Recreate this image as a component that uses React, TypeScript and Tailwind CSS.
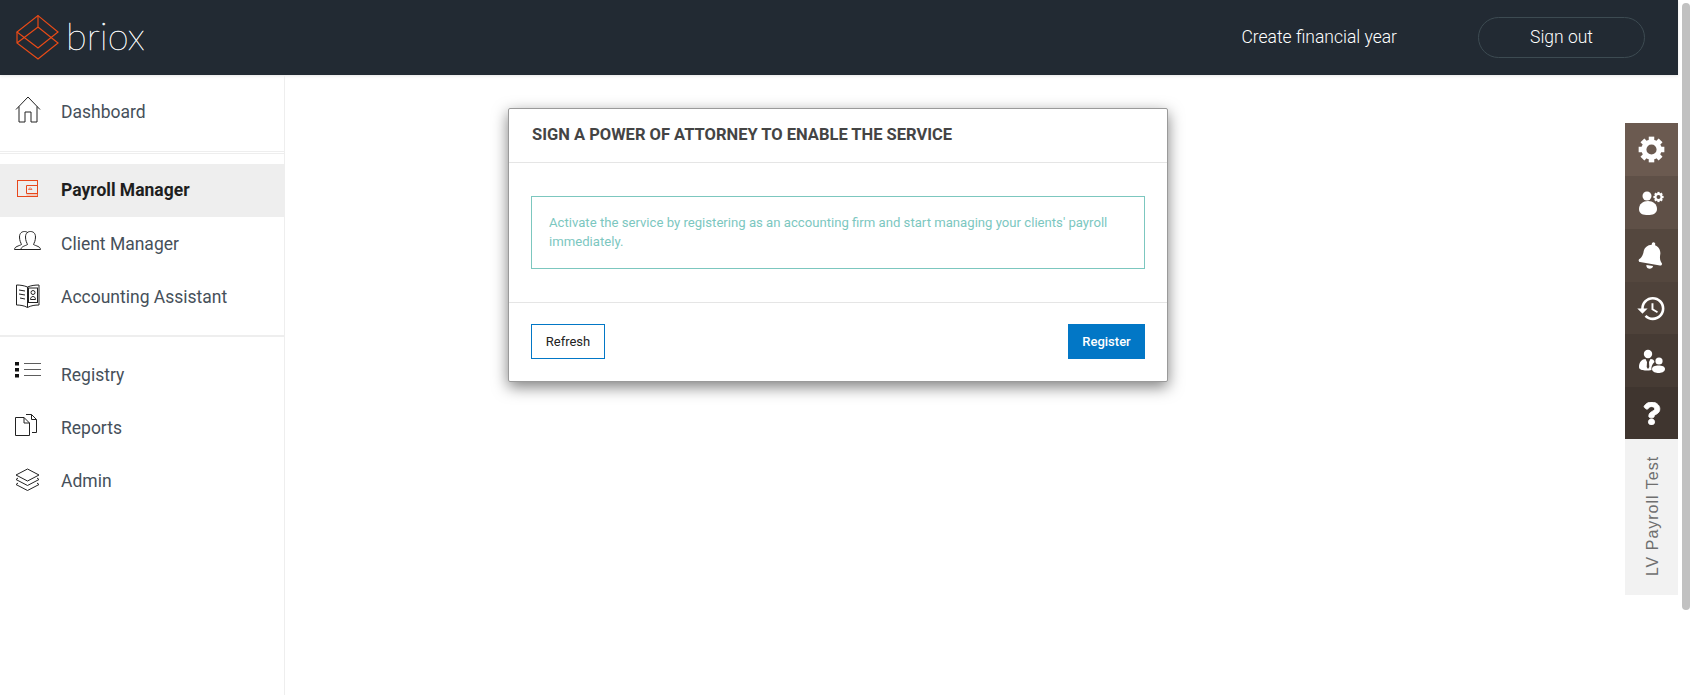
import { FaBell, FaQuestion } from "react-icons/fa"
import { MdHistory } from "react-icons/md"

const font = { fontFamily: "Roboto, sans-serif" }

function Logo() {
  return (
    <svg width="43" height="45" viewBox="0 0 43 45" fill="none" stroke="#ea4a16" strokeWidth="1.2" className="shrink-0">
      <path d="M22 0.6 L42 17 L22 33 L1 17 Z" />
      <path d="M22 0.6 V12 M1 17 V28 L22 44 L42 28 L22 12 L1 28" />
    </svg>
  )
}

function HomeIcon() {
  return (
    <svg width="26" height="27" viewBox="0 0 26 27" fill="none" stroke="#222" strokeWidth="1">
      <path d="M1 13.5 L13 1 L25 13.5" />
      <path d="M4 10.5 V26 H10 V16 H16 V26 H22 V10.5" />
    </svg>
  )
}

function PayrollIcon() {
  return (
    <svg width="21" height="17" viewBox="0 0 21 17" fill="none" stroke="#e8471b" strokeWidth="1">
      <rect x="0.5" y="0.5" width="20" height="16" />
      <path d="M9.5 5.5 H20.5 V13.5 H9.5 Z" />
      <path d="M11.5 9.5 C12 7.5 14.5 7.5 15 9.5 Z" strokeWidth="0.7" />
      <path d="M9.5 15 H20.5" stroke="#f5a58a" />
    </svg>
  )
}

function ClientIcon() {
  return (
    <svg width="27" height="19" viewBox="0 0 27 19" fill="none" stroke="#222" strokeWidth="1">
      <path d="M7 18.5 C7 15.5 11 15 13.5 13.5 C13 12 11.5 10 11.5 6 C11.5 2 14 0.5 16.5 0.5 C19 0.5 21.5 2 21.5 6 C21.5 10 20 12 19.5 13.5 C22 15 26.5 15.5 26.5 18.5 Z" />
      <path d="M7 18.5 H0.5 C0.5 15.5 5 15 7.5 13.5 C7 12 5.5 10 5.5 6 C5.5 2 8 0.5 10.5 0.5 C12 0.5 13 1 14 2" />
    </svg>
  )
}

function AssistantIcon() {
  return (
    <svg width="24" height="24" viewBox="0 0 24 24" fill="none" stroke="#222" strokeWidth="1">
      <path d="M11.5 3 C8 1.5 4 1 0.5 1 V21 C4 21 8 21.5 11.5 23.5 C15 21.5 19 21 23 21 V1 C19 1 15 1.5 11.5 3 V23.5" />
      <rect x="12.5" y="4" width="9" height="14.5" />
      <circle cx="17" cy="8.5" r="2" />
      <path d="M14.5 15.5 C14.5 11.5 19.5 11.5 19.5 15.5 Z M3 6 L9 7 M3 10 L9 11 M4 14 L9 15" />
    </svg>
  )
}

function RegistryIcon() {
  return (
    <svg width="26" height="16" viewBox="0 0 26 16" fill="none" stroke="#333" strokeWidth="0.8">
      <rect x="0" y="0" width="4" height="3.5" fill="#111" stroke="none" />
      <rect x="0" y="6" width="4" height="3.5" fill="#111" stroke="none" />
      <rect x="0" y="12" width="4" height="3.5" fill="#111" stroke="none" />
      <path d="M9 1.5 H26 M9 7.5 H26 M9 13.5 H26" />
    </svg>
  )
}

function ReportsIcon() {
  return (
    <svg width="22" height="22" viewBox="0 0 22 22" fill="none" stroke="#222" strokeWidth="1">
      <path d="M0.5 3.5 H9 L14.5 9 V21.5 H0.5 Z M9 3.5 V9 H14.5" />
      <path d="M11 0.5 H16.5 L21.5 5.5 V18.5 H17 M16.5 0.5 V5.5 H21.5" />
    </svg>
  )
}

function AdminIcon() {
  return (
    <svg width="25" height="23" viewBox="0 0 25 23" fill="none" stroke="#222" strokeWidth="1">
      <path d="M12.5 1 L24 7 L12.5 13 L1 7 Z" />
      <path d="M3 10 L1 11.5 L12.5 17.5 L24 11.5 L22 10" />
      <path d="M3 15 L1 16.5 L12.5 22.5 L24 16.5 L22 15" />
    </svg>
  )
}

function NavRow({ icon, label, active, iconClass }: { icon: React.ReactNode; label: string; active?: boolean; iconClass: string }) {
  return (
    <div className={`flex h-[53px] items-center ${active ? "bg-[#eeeeee]" : ""}`}>
      <div className={`flex w-[61px] shrink-0 justify-start ${iconClass}`}>{icon}</div>
      <span className={active ? "text-[17.5px] font-bold text-[#1f1f1f]" : "pt-[2px] text-[17.5px] text-[#46505a]"}>{label}</span>
    </div>
  )
}

function GearIcon({ size, cx, cy, r, sw }: { size?: number; cx: number; cy: number; r: number; sw: number }) {
  const teeth = [0, 45, 90, 135, 180, 225, 270, 315].map((a) => (
    <rect
      key={a}
      x={cx - sw * 0.55}
      y={cy - r - sw * 1.05}
      width={sw * 1.1}
      height={sw}
      fill="#fff"
      transform={`rotate(${a} ${cx} ${cy})`}
    />
  ))
  const body = (
    <>
      <circle cx={cx} cy={cy} r={r} fill="none" stroke="#fff" strokeWidth={sw} />
      {teeth}
    </>
  )
  if (!size) return body
  return (
    <svg width={size} height={size} viewBox={`0 0 ${size} ${size}`}>
      {body}
    </svg>
  )
}

function UserGearIcon() {
  return (
    <svg width="25" height="24" viewBox="0 0 25 24" fill="#fff">
      <circle cx="8" cy="5" r="4.5" />
      <path d="M0 18 C0 13 4 10 9 10 C14 10 18 13 18 18 C18 23 13 24 9 24 C4 24 0 23 0 18 Z" />
      <GearIcon cx={19.5} cy={6} r={3} sw={2} />
    </svg>
  )
}

function AdvisorIcon() {
  return (
    <svg width="26" height="24" viewBox="0 0 26 24" fill="#fff">
      <circle cx="9" cy="5" r="4.2" />
      <path d="M0 18 C0 13 3 10 6.5 10 L8 13 L7.7 18 L9 20 L10.3 18 L10 13 L11.5 10 C14 10 15 11 15.5 13 C13 15 12 18 12.5 21 C8 22 0 22 0 18 Z" />
      <circle cx="20" cy="12" r="3.6" />
      <path d="M13 20 C13 17.5 16 16.5 19.5 16.5 C23 16.5 26 17.5 26 20 C26 23 22 24 19.5 24 C17 24 13 23 13 20 Z" />
    </svg>
  )
}

const tools = [
  { bg: "bg-[#6b5a50] h-[53px]", icon: <GearIcon size={27} cx={13.5} cy={13.5} r={7.6} sw={5} /> },
  { bg: "bg-[#5f5047] h-[53px]", icon: <UserGearIcon /> },
  { bg: "bg-[#54473e] h-[53px]", icon: <FaBell size={27} className="rotate-[10deg]" /> },
  { bg: "bg-[#4e423a] h-[52px]", icon: <MdHistory size={31} /> },
  { bg: "bg-[#463b34] h-[53px]", icon: <AdvisorIcon /> },
  { bg: "bg-[#3f352f] h-[52px]", icon: <FaQuestion size={23} stroke="currentColor" strokeWidth={18} /> },
]

export default function App() {
  return (
    <div className="relative flex h-[695px] w-full overflow-hidden bg-white" style={font}>
      <div className="flex min-w-0 flex-1 flex-col">
        <header className="flex h-[75px] shrink-0 items-center bg-[#222a33] pl-[16px] pr-[33px] shadow-[0_1px_3px_rgba(0,0,0,0.1)]">
          <Logo />
          <span
            className="ml-[7px] pb-[5px] text-[38px] font-thin leading-none text-white [-webkit-text-stroke:0.4px_#ffffff]"
            style={{ fontFamily: "Lato, sans-serif" }}
          >
            briox
          </span>
          <span className="ml-auto text-[17.5px] font-light text-white">Create financial year</span>
          <button className="ml-[81px] h-[41px] w-[167px] rounded-full border border-[#3d4b52] text-[17.5px] font-light text-white">
            Sign out
          </button>
        </header>
        <div className="flex min-h-0 flex-1">
          <nav className="w-[285px] shrink-0 border-r border-[#eeeeee] pt-[10px]">
            <NavRow icon={<HomeIcon />} label="Dashboard" iconClass="pl-[15px] pb-[5px]" />
            <div className="mt-[13px] h-[3px] border-y border-[#eeeeee]" />
            <div className="mt-[10px]">
              <NavRow icon={<PayrollIcon />} label="Payroll Manager" active iconClass="pl-[17px] pb-[4px]" />
              <NavRow icon={<ClientIcon />} label="Client Manager" iconClass="pl-[14px] pb-[6px]" />
              <NavRow icon={<AssistantIcon />} label="Accounting Assistant" iconClass="pl-[16px] pb-[1px]" />
            </div>
            <div className="mb-[11px] mt-[12px] h-[2px] bg-[#eeeeee]" />
            <NavRow icon={<RegistryIcon />} label="Registry" iconClass="pl-[15px] pb-[9px]" />
            <NavRow icon={<ReportsIcon />} label="Reports" iconClass="pl-[15px] pb-[5px]" />
            <NavRow icon={<AdminIcon />} label="Admin" iconClass="pl-[15px] pb-[3px]" />
          </nav>
          <main className="flex-1 pl-[223px] pt-[33px]">
            <div className="w-[660px] rounded-[2px] border border-[#9a9a9a] bg-white shadow-[0_5px_15px_rgba(0,0,0,0.5)]">
              <div className="flex h-[54px] items-center border-b border-[#e5e5e5] px-[23px]">
                <h2 className="text-[16.5px] font-bold text-[#444444]">SIGN A POWER OF ATTORNEY TO ENABLE THE SERVICE</h2>
              </div>
              <div className="h-[140px] border-b border-[#e5e5e5] px-[22px] pt-[33px]">
                <div className="h-[73px] border border-[#7cc7bf] px-[17px] pt-[16px] text-[13.15px] leading-[19px] text-[#7cc7bf]">
                  Activate the service by registering as an accounting firm and start managing your clients' payroll immediately.
                </div>
              </div>
              <div className="flex items-center justify-between px-[22px] pb-[22px] pt-[21px]">
                <button className="h-[35px] w-[74px] border border-[#0277c6] text-[13px] text-[#222222]">Refresh</button>
                <button className="h-[35px] w-[77px] bg-[#0277c6] text-[13px] font-medium text-white">Register</button>
              </div>
            </div>
          </main>
        </div>
      </div>

      {/* scrollbar */}
      <div className="w-[13px] shrink-0 pl-[4px] pr-px pt-[3px]">
        <div className="h-[607px] rounded-full bg-[#c1c1c1]" />
      </div>

      <aside className="absolute right-[13px] top-[123px] flex w-[53px] flex-col">
        {tools.map((t, i) => (
          <div key={i} className={`flex items-center justify-center text-white ${t.bg}`}>
            {t.icon}
          </div>
        ))}
        <div className="flex h-[156px] items-center justify-center bg-[#f2f2f2] pb-[3px] pl-[4px]">
          <span className="-rotate-90 whitespace-nowrap text-[16px] tracking-[1px] text-[#6f6f6f]" style={{ fontFamily: "'Liberation Sans', sans-serif" }}>
            LV Payroll Test
          </span>
        </div>
      </aside>
    </div>
  )
}
